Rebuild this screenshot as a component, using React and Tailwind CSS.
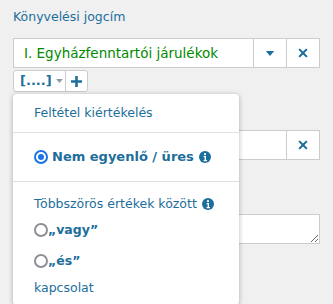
import React from "react";

const Caret = ({ className }) => (
  <svg viewBox="0 0 10 6" className={className} fill="currentColor">
    <path d="M0 0h10L5 6z" />
  </svg>
);

const Times = ({ className }) => (
  <svg viewBox="0 0 12 12" className={className} fill="currentColor">
    <path d="M2.2 0.5 6 4.3 9.8 0.5 11.5 2.2 7.7 6 11.5 9.8 9.8 11.5 6 7.7 2.2 11.5 0.5 9.8 4.3 6 0.5 2.2z" />
  </svg>
);

const Plus = ({ className }) => (
  <svg viewBox="0 0 12 12" className={className} fill="currentColor">
    <path d="M4.6 0h2.8v4.6H12v2.8H7.4V12H4.6V7.4H0V4.6h4.6z" />
  </svg>
);

const Info = () => (
  <svg viewBox="0 0 12 12" className="ml-[5px] inline-block h-[12px] w-[12px] shrink-0 align-[-1px]">
    <circle cx="6" cy="6" r="6" fill="#1c6e9b" />
    <circle cx="6" cy="3.2" r="1.1" fill="#fff" />
    <path d="M4.6 5h2.4v4h1v1.2H4.6V9h1V6.2h-1z" fill="#fff" />
  </svg>
);

const Radio = ({ checked }) =>
  checked ? (
    <span className="inline-flex h-[14px] w-[14px] shrink-0 items-center justify-center rounded-full border-2 border-[#1a73e8] bg-white">
      <span className="h-[6px] w-[6px] rounded-full bg-[#1a73e8]" />
    </span>
  ) : (
    <span className="inline-block h-[14px] w-[14px] shrink-0 rounded-full border-2 border-[#8f8f97] bg-white" />
  );

export default function App() {
  return (
    <div className="h-[304px] w-[333px] overflow-hidden bg-[#f0f0f0] font-['DejaVu_Sans',Verdana,sans-serif] text-[12.5px] text-[#1c6e9b]">
      <div className="relative px-[13px] pt-[9px]">
        <div className="leading-[16px]">Könyvelési jogcím</div>

        {/* select row */}
        <div className="mt-[13px] flex h-[30px] border border-[#cccccc] bg-white">
          <div className="flex flex-1 items-center pl-[10px] text-[13.5px] text-[#008a00]">
            I. Egyházfenntartói járulékok
          </div>
          <div className="flex w-[33px] items-center justify-center border-l border-[#cccccc]">
            <Caret className="h-[5px] w-[10px]" />
          </div>
          <div className="flex w-[33px] items-center justify-center border-l border-[#cccccc]">
            <Times className="h-[10px] w-[10px]" />
          </div>
        </div>

        {/* condition buttons */}
        <div className="mt-[2px] flex h-[22px] w-[75px] rounded-[3px] border border-[#cccccc] bg-white">
          <div className="flex w-[51px] items-center pl-[6px] text-[13px] font-bold">
            [....]
            <Caret className="ml-[4px] h-[4px] w-[7px] text-[#8a9aa8]" />
          </div>
          <div className="flex flex-1 items-center justify-center border-l border-[#cccccc]">
            <Plus className="h-[11px] w-[11px]" />
          </div>
        </div>

        {/* hidden field behind menu */}
        <div className="mt-[38px] flex h-[30px] border border-[#cccccc] bg-white">
          <div className="flex-1" />
          <div className="flex w-[33px] items-center justify-center border-l border-[#cccccc]">
            <Times className="h-[10px] w-[10px]" />
          </div>
        </div>

        <textarea
          readOnly
          className="mt-[54px] block h-[30px] w-full resize-y border border-[#cccccc] bg-white"
        />

        {/* dropdown menu */}
        <div className="absolute left-[13px] top-[94px] w-[226px] rounded-[4px] bg-white shadow-[0_1px_5px_rgba(0,0,0,0.3)]">
          <div className="flex h-[38px] items-center px-[21px]">Feltétel kiértékelés</div>
          <div className="h-px bg-[#e0e0e0]" />
          <div className="flex h-[48px] items-center pl-[21px] text-[13px] font-bold">
            <Radio checked />
            <span className="ml-[4px]">Nem egyenlő / üres</span>
            <Info />
          </div>
          <div className="h-px bg-[#e0e0e0]" />
          <div className="px-[21px] pb-[9px] pt-[14px]">
            <div className="flex items-center whitespace-nowrap leading-[16px]">
              Többszörös értékek között
              <Info />
            </div>
            <div className="mt-[9px] flex items-end">
              <Radio />
              <span className="-mb-[3px] font-bold">„vagy”</span>
            </div>
            <div className="mt-[15px] flex items-end">
              <Radio />
              <span className="-mb-[3px] font-bold">„és”</span>
            </div>
            <div className="mt-[12px] leading-[16px]">kapcsolat</div>
          </div>
        </div>
      </div>
    </div>
  );
}
